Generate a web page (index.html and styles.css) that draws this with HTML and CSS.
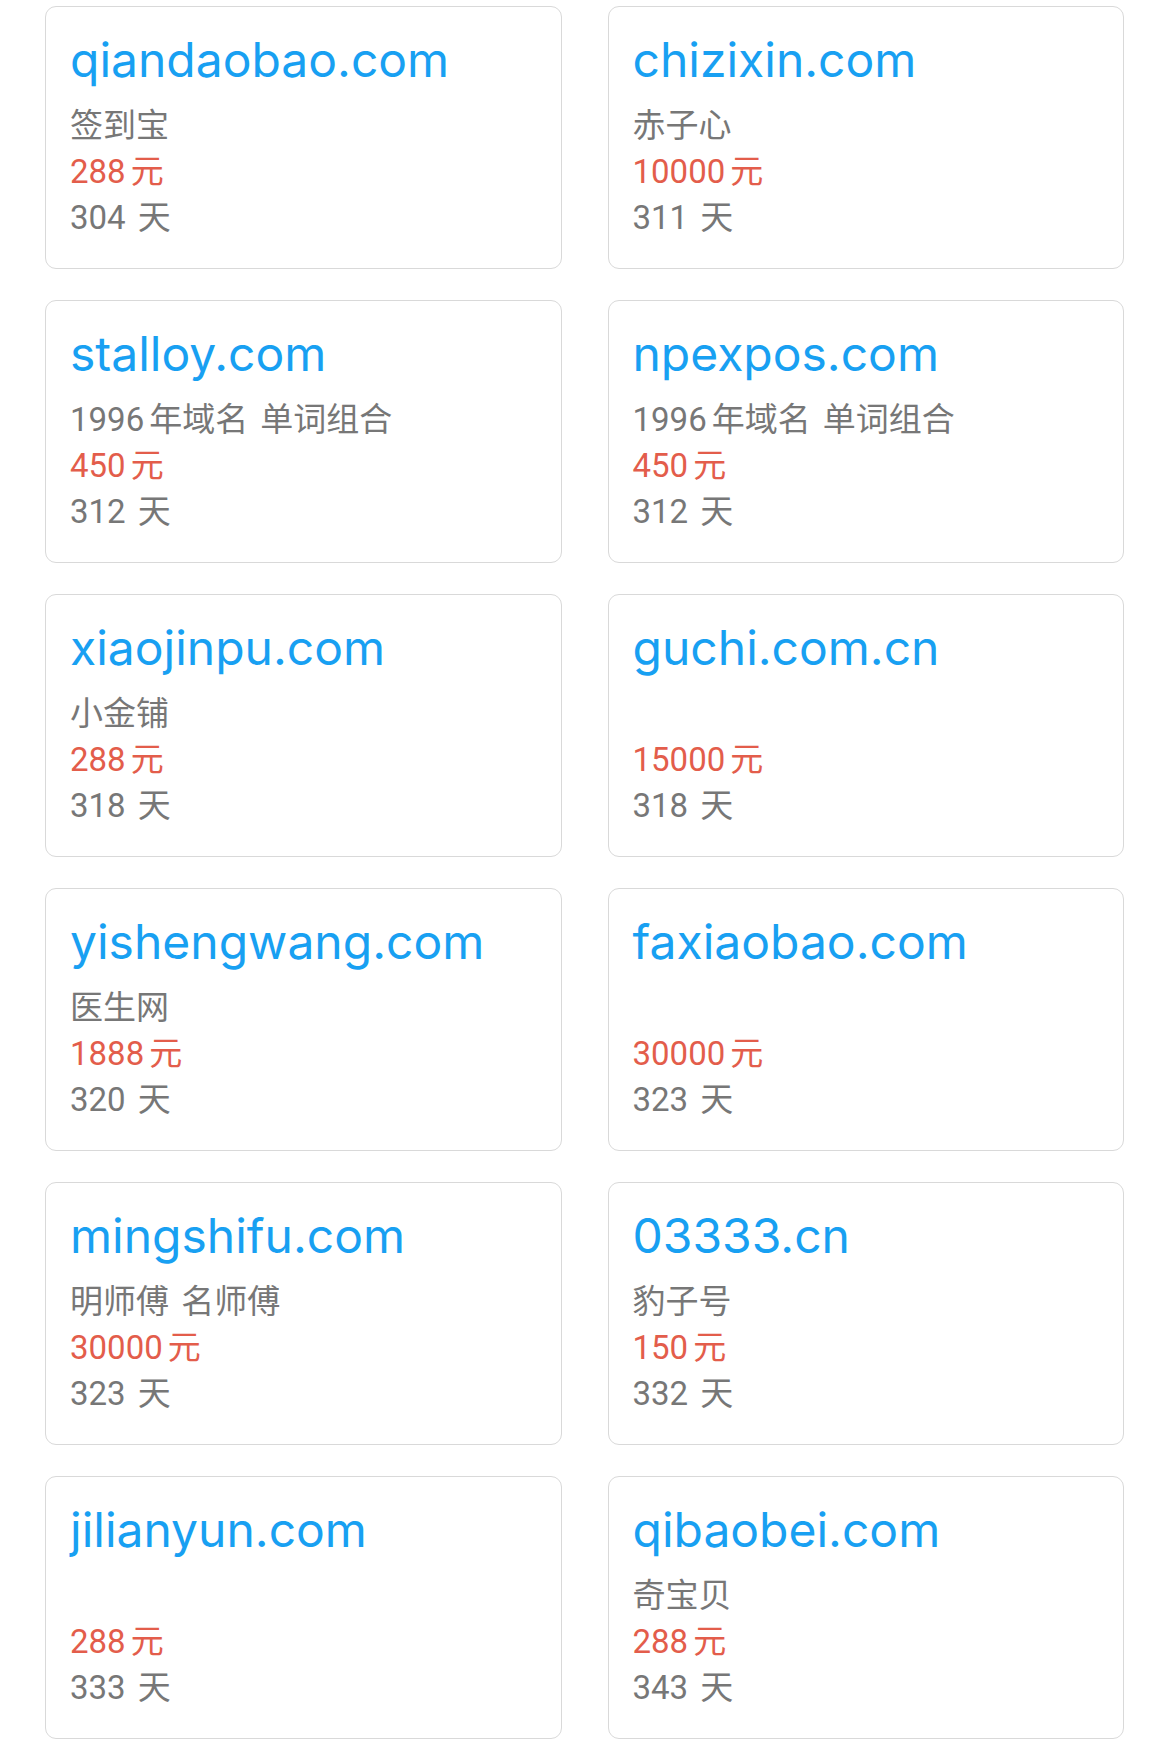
FILE: index.html
```html
<!DOCTYPE html>
<html lang="zh-CN">

<head>
    <meta charset="UTF-8">
    <meta name="viewport" content="width=device-width, initial-scale=1.0">
    <title>域名列表</title>
    <link rel="stylesheet" href="styles.css">
</head>

<body>
    <div class="list">
        <div class="item">
            <p class="domain">qiandaobao.com</p>
            <p class="desc">签到宝</p>
            <p class="price"><span class="num">288</span>元</p>
            <p class="days">304 天</p>
        </div>
        <div class="item">
            <p class="domain">chizixin.com</p>
            <p class="desc">赤子心</p>
            <p class="price"><span class="num">10000</span>元</p>
            <p class="days">311 天</p>
        </div>
        <div class="item">
            <p class="domain">stalloy.com</p>
            <p class="desc"><span class="num">1996</span>年域名 单词组合</p>
            <p class="price"><span class="num">450</span>元</p>
            <p class="days">312 天</p>
        </div>
        <div class="item">
            <p class="domain">npexpos.com</p>
            <p class="desc"><span class="num">1996</span>年域名 单词组合</p>
            <p class="price"><span class="num">450</span>元</p>
            <p class="days">312 天</p>
        </div>
        <div class="item">
            <p class="domain">xiaojinpu.com</p>
            <p class="desc">小金铺</p>
            <p class="price"><span class="num">288</span>元</p>
            <p class="days">318 天</p>
        </div>
        <div class="item">
            <p class="domain">guchi.com.cn</p>
            <p class="desc"></p>
            <p class="price"><span class="num">15000</span>元</p>
            <p class="days">318 天</p>
        </div>
        <div class="item">
            <p class="domain">yishengwang.com</p>
            <p class="desc">医生网</p>
            <p class="price"><span class="num">1888</span>元</p>
            <p class="days">320 天</p>
        </div>
        <div class="item">
            <p class="domain">faxiaobao.com</p>
            <p class="desc"></p>
            <p class="price"><span class="num">30000</span>元</p>
            <p class="days">323 天</p>
        </div>
        <div class="item">
            <p class="domain">mingshifu.com</p>
            <p class="desc">明师傅 名师傅</p>
            <p class="price"><span class="num">30000</span>元</p>
            <p class="days">323 天</p>
        </div>
        <div class="item">
            <p class="domain">03333.cn</p>
            <p class="desc">豹子号</p>
            <p class="price"><span class="num">150</span>元</p>
            <p class="days">332 天</p>
        </div>
        <div class="item">
            <p class="domain">jilianyun.com</p>
            <p class="desc"></p>
            <p class="price"><span class="num">288</span>元</p>
            <p class="days">333 天</p>
        </div>
        <div class="item">
            <p class="domain">qibaobei.com</p>
            <p class="desc">奇宝贝</p>
            <p class="price"><span class="num">288</span>元</p>
            <p class="days">343 天</p>
        </div>
    </div>
</body>

</html>
```

FILE: styles.css
```css
*,
::before,
::after {
    box-sizing: border-box;
    margin: 0;
    padding: 0;
}

body {
    background: #fff;
    font-family: Roboto, "Noto Sans CJK SC", sans-serif;
}

.list {
    display: grid;
    grid-template-columns: 1fr 1fr;
    gap: 31px 46px;
    padding: 6px 46px 0 45px;
}

.item {
    height: 263px;
    padding: 18px 24px 0;
    border: 1px solid #d9d9d9;
    border-radius: 11px;
}

.domain {
    height: 70px;
    margin-bottom: 8px;
    font-family: Inter, "Noto Sans CJK SC", sans-serif;
    font-size: 48px;
    line-height: 70px;
    color: #18a0f2;
    white-space: nowrap;
}

.desc,
.price,
.days {
    height: 46px;
    font-size: 33px;
    line-height: 46px;
    color: #777;
    white-space: nowrap;
    word-spacing: 4px;
}

.price {
    color: #e35d4b;
}

.num {
    margin-right: 5px;
}
```
